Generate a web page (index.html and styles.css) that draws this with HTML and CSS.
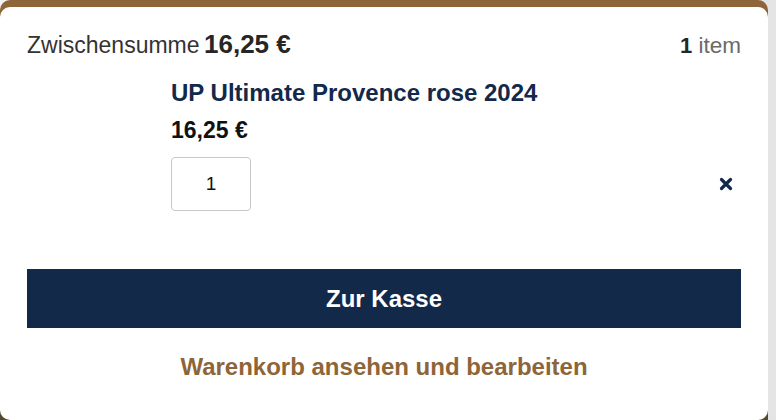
FILE: index.html
```html
<!DOCTYPE html>
<html lang="de">
<head>
<meta charset="utf-8">
<title>Warenkorb</title>
<link rel="stylesheet" href="styles.css">
</head>
<body>
<div class="frame">
  <div class="card">
    <div class="summary">
      <div class="subtotal"><span class="label">Zwischensumme</span> <span class="amount">16,25&nbsp;€</span></div>
      <div class="count"><strong>1</strong> item</div>
    </div>
    <div class="item">
      <a class="title" href="#">UP Ultimate Provence rose 2024</a>
      <div class="price">16,25&nbsp;€</div>
      <div class="qty-row">
        <input class="qty" type="text" value="1">
        <button class="remove" aria-label="Entfernen">
          <svg width="14" height="14" viewBox="0 0 14 14"><path d="M2.5 2.5 L11.5 11.5 M11.5 2.5 L2.5 11.5" stroke="#13294a" stroke-width="3.2" stroke-linecap="round"/></svg>
        </button>
      </div>
    </div>
    <a class="checkout" href="#">Zur Kasse</a>
    <a class="view-cart" href="#">Warenkorb ansehen und bearbeiten</a>
  </div>
</div>
</body>
</html>
```
FILE: styles.css
```css
html, body {
  margin: 0;
  padding: 0;
}
body {
  width: 776px;
  height: 420px;
  overflow: hidden;
  background: linear-gradient(to right, #f4f4f4, #e4e4e4);
  font-family: "Liberation Sans", Arial, sans-serif;
}
.frame {
  width: 768px;
  height: 420px;
  box-sizing: border-box;
  padding-top: 7px;
  border-radius: 10px 10px 0 0;
  background: linear-gradient(to bottom, #8d6539 0, #8d6539 60%, #4e4a2c 60%);
}
.card {
  height: 413px;
  box-sizing: border-box;
  background: #fff;
  border-radius: 10px;
  padding: 22px 27px 0 27px;
  display: flex;
  flex-direction: column;
}
.summary {
  display: flex;
  justify-content: space-between;
  align-items: baseline;
  line-height: 30px;
}
.label {
  font-size: 23px;
  color: #333;
}
.amount {
  font-size: 26px;
  font-weight: bold;
  color: #262626;
}
.count {
  font-size: 22.5px;
  color: #6a6a6a;
}
.count strong {
  color: #262626;
  font-size: 22px;
}
.item {
  margin-top: 16px;
  padding-left: 144px;
  display: flex;
  flex-direction: column;
}
.title {
  font-size: 24px;
  line-height: 28px;
  font-weight: bold;
  color: #13294a;
  text-decoration: none;
}
.price {
  margin-top: 9px;
  font-size: 23px;
  line-height: 28px;
  font-weight: bold;
  color: #111;
}
.qty-row {
  margin-top: 13px;
  display: flex;
  justify-content: space-between;
  align-items: center;
}
.qty {
  width: 80px;
  height: 54px;
  box-sizing: border-box;
  border: 1.5px solid #c8c8c8;
  border-radius: 4px;
  text-align: center;
  font-family: "Liberation Sans", Arial, sans-serif;
  font-size: 19px;
  color: #111;
  padding: 0;
  margin: 0;
}
.remove {
  width: 14px;
  height: 14px;
  padding: 0;
  margin: 0 8px 0 0;
  border: 0;
  background: none;
  display: flex;
}
.checkout {
  margin-top: 58px;
  height: 59px;
  background: #13294a;
  color: #fff;
  font-size: 24px;
  font-weight: bold;
  text-decoration: none;
  display: flex;
  align-items: center;
  justify-content: center;
}
.view-cart {
  margin-top: 24px;
  line-height: 30px;
  font-size: 24px;
  font-weight: bold;
  color: #8d6539;
  text-align: center;
  text-decoration: none;
}
```
